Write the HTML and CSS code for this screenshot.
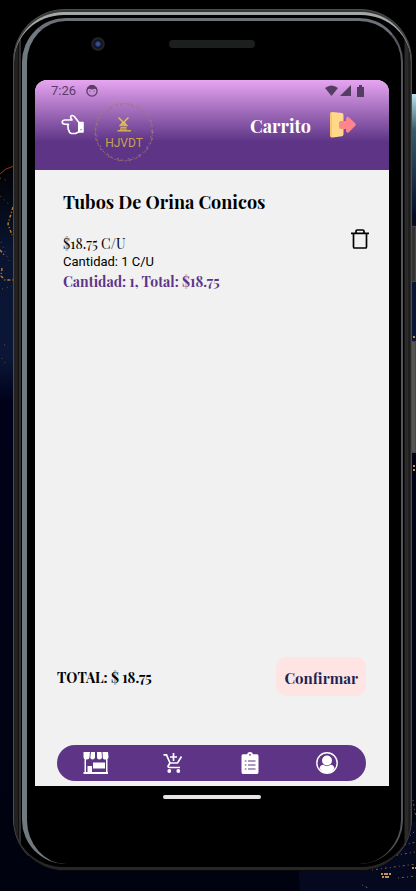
FILE: index.html
```html
<!DOCTYPE html>
<html lang="es">
<head>
<meta charset="utf-8">
<meta name="viewport" content="width=device-width, initial-scale=1">
<title>Carrito</title>
<link rel="stylesheet" href="styles.css">
</head>
<body>
<svg class="backdrop" viewBox="0 0 416 891" preserveAspectRatio="none" aria-hidden="true">
  <defs>
    <linearGradient id="sea" x1="0" y1="0" x2="0" y2="1">
      <stop offset="0" stop-color="#000"/><stop offset=".18" stop-color="#000"/>
      <stop offset=".28" stop-color="#0a1430"/><stop offset=".4" stop-color="#0b1738"/>
      <stop offset=".45" stop-color="#01021a"/><stop offset="1" stop-color="#01020f"/>
    </linearGradient>
    <linearGradient id="glow" x1="0" y1="0" x2="0" y2="1">
      <stop offset="0" stop-color="#b9e4ee"/><stop offset=".3" stop-color="#385c6c"/><stop offset="1" stop-color="#04102a"/>
    </linearGradient>
  </defs>
  <path fill="url(#sea)" d="M0 0h416v891H0z"/>
  <path fill="#050920" d="M298 868 350 868 416 820V891H300z"/>
  <path fill="url(#glow)" d="M412 94h4v120h-4z"/>
  <path fill="none" stroke="#8a3d17" d="M0 174Q5 168 14 166"/>
  <path fill="none" stroke="#b67b2c" stroke-width="1.5" stroke-dasharray="3 2 1 2" d="M13 207 8 224 12 235M0 250 5 256M2 268 1 276 5 280H13"/>
  <path fill="none" stroke="#6b5230" stroke-dasharray="1 4" d="M0 178 8 181M0 196 10 205M1 242 9 261M2 289 12 286M4 345 8 344M2 358 7 366"/>
  <path fill="none" stroke="#7d6437" stroke-dasharray="1 3 2 3" d="M413 800 416 818M410 836 416 830M400 846 416 842M392 856 415 852M372 870 416 864M362 885 368 888M398 878 416 876"/>
  <path fill="none" stroke="#c09350" stroke-width="2" stroke-dasharray="2 1 4 1" d="M381 874h10M382 877h8M412 868h4M413 466h3M413 470h3M413 337h3"/>
</svg>
<div class="phone">
  <div class="rim">
    <div class="bezel">
      <div class="sensors"><span class="camera"></span><span class="speaker"></span></div>
      <div class="screen">
        <header class="top">
          <div class="status">
            <span>7:26</span>
            <svg width="12" height="12" viewBox="0 0 12 12" aria-hidden="true"><circle cx="6" cy="6" r="5.1" fill="none" stroke="#5c3c68" stroke-width="1.300"/><path fill="#5c3c68" d="M1 5V3L4 0h4l3 3v2L9 3.800 6 4.500 3 3.800z"/><path fill="#5c3c68" d="M3.500 5.500h1v1h-1zM7.500 5.500h1v1h-1z"/></svg>
            <svg class="signals" width="40" height="12" viewBox="0 0 40 12" fill="#563b62" aria-hidden="true"><path d="M0 3Q6.500-2 13 3L6.500 11z"/><path d="M26 0v11H15z"/><path d="M32 2h2V0h3v2h2v10h-7z"/></svg>
          </div>
          <div class="bar">
            <button class="icon back" aria-label="Volver">
              <svg width="24" height="22" viewBox="0 0 24 22" fill="none" stroke="#fff" stroke-width="1.600" stroke-linejoin="round" stroke-linecap="round"><path d="M17.500 8 14.500 4Q13 1.300 11 1.500 9 2 9.800 4L11 6H3.500Q1.200 6.500 1.200 8.200 1.500 10.200 4 10.300H7.500Q6.200 12 7.200 13.500 6.500 15 8 16.500 8 19 10.500 19.500H14.500L17.500 18"/><path fill="#fff" d="M17.800 8.500H22V18h-4.200z"/><path stroke="#5d3486" stroke-width="1" d="M20 15.500v.3"/></svg>
            </button>
            <div class="logo">
              <svg class="ring" viewBox="0 0 60 60" aria-hidden="true"><g fill="none"><circle cx="30" cy="30" r="28.500" stroke="#a67b72" stroke-width=".8" stroke-dasharray="2 1 1 2 3 1"/><circle cx="30" cy="30" r="27.300" stroke="#94689d" stroke-dasharray="1 3 2 5"/><circle cx="30" cy="30" r="29.200" stroke="#b58a58" stroke-width=".6" stroke-dasharray="1 5 2 3"/></g></svg>
              <svg width="16" height="16" viewBox="0 0 16 16" aria-hidden="true"><path fill="#d3ae51" d="M5.800 5h3.600L11 13h4v1.500H1.500V13H4z"/><path stroke="#dfbd60" stroke-width="1.500" d="M2.500 .5 7.500 5.500M12.500 .5 7.500 5.500M3.500 9 7.500 5.500M11.500 9 7.500 5.500"/><path stroke="#75528b" stroke-width=".7" d="M5 9.500h5M5 12h6"/></svg>
              <span>HJVDT</span>
            </div>
            <h1>Carrito</h1>
            <button class="icon exit" aria-label="Salir">
              <svg width="26" height="26" viewBox="0 0 26 26"><path fill="#ffd88a" d="M1 1Q1 0 2.500 0L12 1Q13.500 1.500 13.500 3V22Q13.500 24 12 24.300L2.500 25.500Q1 25.500 1 24z"/><path fill="#fbc66b" d="M0 1.500Q0 .3 1.500 .2L2 .4V25.300L1.300 25.400Q0 25 0 24z"/><path fill="#ff858d" d="M10.500 9H16V6.500Q16.500 4.300 18.500 5L25 11Q26.500 12.500 25 14L18.500 20.500Q16.500 21.300 16 19V17H11Q9 16.800 9 14.500V11Q9 9.300 10.500 9z"/></svg>
            </button>
          </div>
        </header>
        <main>
          <article class="item">
            <h2>Tubos De Orina Conicos</h2>
            <div class="row">
              <div>
                <p class="price">$18.75 C/U</p>
                <p class="qty">Cantidad: 1 C/U</p>
                <p class="sum">Cantidad: 1, Total: $18.75</p>
              </div>
              <button class="icon" aria-label="Eliminar">
                <svg width="18" height="20" viewBox="0 0 18 20" fill="none" stroke="#000"><path stroke-width="1.700" d="M0 4.400h18"/><path stroke-width="1.700" d="M5 4V2.200Q5 1 6.200 1h5.600Q13 1 13 2.200V4M2.500 5V18Q2.500 19 3.500 19H14.500Q15.500 19 15.500 18V5"/></svg>
              </button>
            </div>
          </article>
          <section class="checkout">
            <p>TOTAL: $ 18.75</p>
            <button class="confirm">Confirmar</button>
          </section>
        </main>
        <nav>
          <a href="#tienda" aria-label="Tienda"><svg width="26" height="22" viewBox="0 0 26 22"><path fill="#fff" d="M.5 0H7L6.500 5Q6.500 7.500 3.500 7.500 .5 7.500 .5 5zM8 0h4v5.500Q11.500 7.500 9.500 7.500 7.300 7.500 7.300 5.500zM14 0h4.500L19 5.500Q18.500 7.500 16.500 7.500 14 7.500 14 5.500zM19.500 0H25l.5 5q0 2.500-3 2.500T19.800 5zM1.500 7H3v13h20V7h1.500v13H25v2H.5v-2h1zM10 10.500h12v6H10zM4.500 14H9v6H4.500z"/></svg></a>
          <a href="#carrito" aria-label="Agregar al carrito"><svg width="20" height="20" viewBox="0 0 20 20" fill="none" stroke="#fff" stroke-width="1.700"><path d="M.5 1.800H3.500L7 10H14.500L18.500 3.500M7 10 5 13.200Q5 14.500 6.500 14.500H17"/><path d="M10.500 0v8M7 4h7"/><circle cx="6.300" cy="18" r="1.900" fill="#fff" stroke="none"/><circle cx="15.300" cy="18" r="1.900" fill="#fff" stroke="none"/></svg></a>
          <a href="#pedidos" aria-label="Pedidos"><svg width="18" height="22" viewBox="0 0 18 22"><path fill="#fff" d="M2 2.200H6Q6.500 0 9 0t3 2.200h4Q17.500 2.200 17.500 4V20q0 2-1.500 2H2Q.5 22 .5 20V4Q.5 2.200 2 2.200z"/><circle cx="9" cy="2.800" r=".9" fill="#5d3486"/><path stroke="#5d3486" stroke-width="1.200" d="M3.800 9h1.600M7 9h7.500M3.800 13h1.600M7 13h7.500M3.800 17h1.600M7 17h7.500"/></svg></a>
          <a href="#perfil" aria-label="Perfil"><svg width="22" height="22" viewBox="0 0 22 22"><circle cx="11" cy="11" r="10.200" fill="none" stroke="#fff" stroke-width="1.400"/><circle cx="11" cy="8.500" r="5" fill="#fff"/><path fill="#fff" d="M3.500 16.500Q4 13 7.500 12.800 11 15.600 14.500 12.800 18 13 18.500 16.500 15.500 21 11 21T3.500 16.500z"/></svg></a>
        </nav>
      </div>
      <div class="home"></div>
    </div>
  </div>
  <span class="key power"></span>
  <span class="key volume"></span>
</div>
</body>
</html>
```
FILE: styles.css
```css
* { box-sizing: border-box; }
body {
  margin: 0;
  min-height: 100vh;
  display: flex;
  flex-direction: column;
  overflow-x: hidden;
  background: #000;
  color: #000;
  font-family: "Playfair Display", "Liberation Serif", serif;
}
h1, h2, p { margin: 0; }
svg { display: block; }
button { font: inherit; border: 0; padding: 0; cursor: pointer; }
.icon { background: none; }
.backdrop { position: fixed; z-index: -1; inset: 0; width: 100%; height: 100%; }

.phone {
  position: relative;
  flex: 1;
  display: flex;
  flex-direction: column;
  margin: 9px 4px 20px 13px;
  padding-top: 2px;
  border: 1px solid #4c4c4c;
  border-bottom-color: #080808;
  border-radius: 52px;
  background: #383838;
}
.rim {
  flex: 1;
  display: flex;
  padding: 3px 8px 3px;
  border-top: 3px solid #a5a8a9;
  border-radius: 50px;
  background: linear-gradient(90deg, #222 0 4px, #111 4px 5px, #303030 5px 7px, #000 7px 50%, #000 calc(100% - 7px), #2d2a2a calc(100% - 6px) calc(100% - 3px), #161616 calc(100% - 2px), #333 100%);
  border-bottom: 3px solid #262626;
}
.bezel {
  flex: 1;
  display: flex;
  flex-direction: column;
  padding: 0 12px 0 8px;
  border-style: solid;
  border-width: 3px 2px 0 5px;
  border-color: #6c7078 #55565d #000 #717981;
  border-radius: 44px;
  background: #000;
}
.sensors {
  display: grid;
  grid-template-columns: 1fr auto 1fr;
  align-items: center;
  height: 45px;
  margin-bottom: 14px;
}
.camera {
  width: 14px;
  height: 14px;
  margin-left: 56px;
  border-radius: 50%;
  background: radial-gradient(circle, #3d5591 0 1px, #172548 3px, #080d18 4px, #202224 5px 6px, #151515 7px);
}
.speaker { width: 86px; height: 8px; border-radius: 4px; background: #1d1f1f; }

.screen {
  flex: 1;
  display: flex;
  flex-direction: column;
  overflow: hidden;
  border-radius: 12px 12px 0 0;
  background: #f1f1f1;
}
.top { height: 90px; background: linear-gradient(#e6a5f0 0, #5d3486 62px); }
.status {
  display: flex;
  align-items: center;
  gap: 10px;
  height: 22px;
  padding: 0 24px 0 16px;
  color: #5c3c68;
  font: 13px/22px Roboto, sans-serif;
}
.signals { margin-left: auto; }
.bar { display: flex; align-items: flex-start; padding: 0 33px 0 26px; }
.back { margin-top: 12px; }
.logo {
  position: relative;
  display: flex;
  flex-direction: column;
  align-items: center;
  width: 60px;
  height: 60px;
  margin-left: 9px;
  padding-top: 15px;
  color: #c9a255;
  font: 12px/20px Roboto, sans-serif;
}
.ring { position: absolute; inset: 0; }
h1 { margin-left: auto; padding-right: 19px; color: #fff; font-size: 18px; line-height: 48px; }
.exit { margin-top: 10px; }

main { flex: 1; display: flex; flex-direction: column; justify-content: space-between; }
.item { padding: 20px 20px 0 28px; }
h2 { font-size: 18px; line-height: 24px; }
.row { display: flex; justify-content: space-between; align-items: flex-start; padding-top: 15px; }
.price { padding-top: 6px; font-size: 14px; line-height: 18px; }
.qty { font: 13px/18px Roboto, sans-serif; }
.sum { color: #5d3486; font-size: 14px; font-weight: bold; line-height: 22px; }
.checkout {
  display: flex;
  align-items: center;
  justify-content: space-between;
  padding: 0 23px 49px 22px;
  font-size: 14px;
  font-weight: bold;
}
.checkout p { padding-top: 2px; }
.confirm {
  height: 39px;
  padding: 2px 8px 0;
  border-radius: 10px;
  background: #ffe4e4;
  color: #1c2452;
  font-size: 15px;
}
nav {
  display: grid;
  grid-template-columns: repeat(4, 1fr);
  place-items: center;
  height: 36px;
  margin: 0 23px 5px 22px;
  border-radius: 18px;
  background: #5d3486;
}
.home { width: 98px; height: 4px; margin: 9px auto 65px; border-radius: 2px; background: #e8e4e6; }
.key { position: absolute; right: -5px; width: 5px; border: 1px solid #484848; background: #333; }
.power { top: 216px; height: 56px; }
.volume { top: 331px; height: 112px; background: #555; }
```
